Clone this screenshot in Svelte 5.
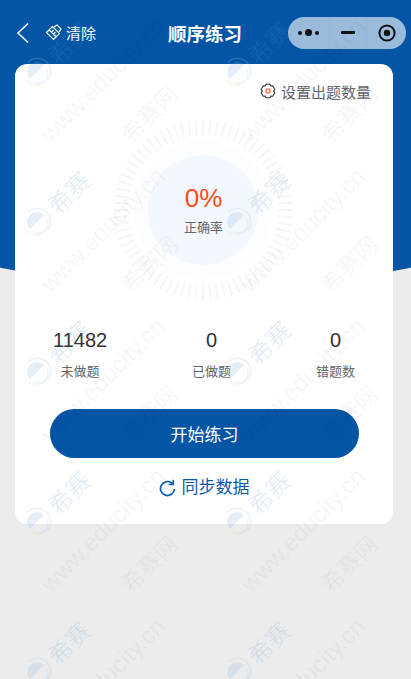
<script>
  const ticks = Array.from({ length: 76 }, (_, i) => (i * 360) / 76);
  const tiles = Array.from({ length: 15 }, (_, i) => i);
  const stats = [
    { value: 11482, label: "未做题" },
    { value: 0, label: "已做题" },
    { value: 0, label: "错题数" },
  ];
</script>

<div class="page">
  <div class="hero"></div>

  <header class="nav">
    <div class="nav-left">
      <svg class="back" width="14" height="22" viewBox="0 0 14 22">
        <path d="M12 1.5 L2 11 L12 20.5" fill="none" stroke="#fff" stroke-width="1.6" />
      </svg>
      <span class="clear">
        <svg width="17" height="17" viewBox="0 0 17 17" fill="none" stroke="#fff" stroke-width="1.2">
          <path d="M1.5 8.5 L7.5 2.5 L14.5 9.5 L8.5 15.5 Z" />
          <path d="M4 6 L11.5 13 M6 8.5 L8.5 6 M8 10.5 L10.5 8" />
          <path d="M9 3 L12 1 L16 5 L14 8" />
        </svg>
        清除
      </span>
    </div>
    <h1>顺序练习</h1>
    <div class="capsule">
      <span class="cap-cell">
        <i class="dot small"></i><i class="dot"></i><i class="dot small"></i>
      </span>
      <span class="cap-cell line"><i class="dash"></i></span>
      <span class="cap-cell">
        <svg width="26" height="26" viewBox="0 0 26 26">
          <circle cx="13" cy="13" r="7.6" fill="none" stroke="#111" stroke-width="2" />
          <circle cx="13" cy="13" r="3.2" fill="#111" />
        </svg>
      </span>
    </div>
  </header>

  <main class="card">
    <div class="setting">
      <svg width="16" height="16" viewBox="0 0 16 16">
        <path
          d="M6 1.2 H10 L10.8 3 L12.8 2.8 L14.8 6.2 L13.6 8 L14.8 9.8 L12.8 13.2 L10.8 13 L10 14.8 H6 L5.2 13 L3.2 13.2 L1.2 9.8 L2.4 8 L1.2 6.2 L3.2 2.8 L5.2 3 Z"
          fill="none"
          stroke="#333"
          stroke-width="1.1"
          stroke-linejoin="round"
        />
        <circle cx="8" cy="8" r="2.1" fill="none" stroke="#fa6a4a" stroke-width="1.3" />
      </svg>
      设置出题数量
    </div>

    <div class="gauge">
      <svg class="ring" width="182" height="182" viewBox="0 0 182 182">
        {#each ticks as deg}
          <line x1="91" y1="1" x2="91" y2="16" stroke="#f6f6f6" stroke-width="2" transform="rotate({deg} 91 91)" />
        {/each}
        <circle cx="91" cy="91" r="69" fill="#fcfdff" />
        <circle cx="91" cy="91" r="55" fill="#f3f8fe" />
      </svg>
      <div class="rate">
        <span class="percent">0%</span>
        <span class="rate-label">正确率</span>
      </div>
    </div>

    <div class="stats">
      {#each stats as s}
        <div class="stat">
          <span class="num">{s.value}</span>
          <span class="lbl">{s.label}</span>
        </div>
      {/each}
    </div>

    <button class="start">开始练习</button>

    <div class="sync">
      <svg width="17" height="18" viewBox="0 0 17 18" fill="none" stroke="#0a5aa8" stroke-width="1.7">
        <path d="M13.5 4.6 A7 7 0 1 0 15.5 10" />
        <path d="M14.2 0.8 V5.4 H9.6" stroke-width="1.5" />
      </svg>
      同步数据
    </div>
  </main>

  <div class="marks">
    {#each tiles as t}
      <div class="tile">
        <svg class="logo" width="40" height="40" viewBox="0 0 40 40" fill="none">
          <path d="M7.5 25 A13.5 13.5 0 0 0 24 33" stroke="#efecb8" stroke-width="1" opacity="0.5" />
          <path d="M11 10 A13.5 13.5 0 0 1 31 28" stroke="#a9c9e4" stroke-width="1.4" opacity="0.25" />
          <path d="M13 27 A9.5 9.5 0 0 1 27 13 Z" fill="#8db8dd" opacity="0.22" />
          <path d="M16 30 A10 10 0 0 0 30 17" stroke="#8db8dd" stroke-width="2" opacity="0.16" />
        </svg>
        <span class="mk blue">希赛</span>
        <span class="mk url">www.educity.cn</span>
        <span class="mk gray">希赛网</span>
      </div>
    {/each}
  </div>
</div>

<style>
  :global(body) {
    margin: 0;
    background: #ececec;
  }

  .page {
    position: relative;
    width: 411px;
    height: 679px;
    overflow: hidden;
    background: #ececec;
    font-family: "Liberation Sans", "Noto Sans CJK SC", sans-serif;
  }

  .hero {
    position: absolute;
    inset: 0 0 auto 0;
    height: 288px;
    background: #0455a6;
    clip-path: circle(1045px at 50% -757px);
  }

  .nav {
    position: relative;
    height: 64px;
    display: grid;
    grid-template-columns: 1fr auto 1fr;
    align-items: center;
    padding: 1px 5px 0 16px;
    box-sizing: border-box;
    color: #fff;
  }

  .nav-left {
    display: flex;
    align-items: center;
    gap: 15px;
  }

  .clear {
    display: flex;
    align-items: center;
    gap: 4px;
    font-size: 15px;
  }

  h1 {
    margin: 0 12px 0 0;
    font-size: 18.5px;
    font-weight: 700;
  }

  .capsule {
    justify-self: end;
    width: 118px;
    height: 32px;
    border-radius: 16px;
    background: rgba(255, 255, 255, 0.6);
    display: grid;
    grid-template-columns: 41px 38px 39px;
    align-items: center;
  }

  .cap-cell {
    display: flex;
    align-items: center;
    justify-content: center;
    gap: 3px;
    height: 100%;
  }

  .line {
    box-shadow: inset 1px 0 rgba(0, 0, 0, 0.02), inset -1px 0 rgba(0, 0, 0, 0.02);
  }

  .dot {
    width: 7px;
    height: 7px;
    border-radius: 50%;
    background: #111;
  }

  .dot.small {
    width: 4px;
    height: 4px;
  }

  .dash {
    width: 14px;
    height: 3px;
    background: #111;
    border-radius: 1px;
  }

  .card {
    position: relative;
    width: 378px;
    height: 460px;
    margin-left: 15px;
    box-sizing: border-box;
    background: #fff;
    border-radius: 12px;
    display: flex;
    flex-direction: column;
  }

  .setting {
    align-self: flex-end;
    display: flex;
    align-items: center;
    gap: 5px;
    margin: 18px 22px 0 0;
    height: 18px;
    font-size: 15px;
    color: #5f6670;
  }

  .gauge {
    position: relative;
    align-self: center;
    width: 182px;
    height: 182px;
    margin: 19px 0 0 -2px;
  }

  .ring {
    display: block;
  }

  .rate {
    position: absolute;
    inset: 0;
    display: flex;
    flex-direction: column;
    align-items: center;
    justify-content: center;
  }

  .percent {
    font-size: 26px;
    line-height: 30px;
    margin-top: -1px;
    margin-left: 1px;
    color: #fb4d1e;
  }

  .rate-label {
    font-size: 13px;
    line-height: 18px;
    margin-top: 6px;
    margin-left: 1px;
    color: #666;
  }

  .stats {
    display: flex;
    justify-content: space-between;
    padding: 0 38px;
    margin-top: 28px;
  }

  .stat {
    display: flex;
    flex-direction: column;
    align-items: center;
    min-width: 39px;
  }

  .num {
    font-size: 20px;
    line-height: 22px;
    color: #333;
  }

  .lbl {
    font-size: 13px;
    line-height: 18px;
    margin-top: 12px;
    color: #666;
  }

  .start {
    width: 309px;
    height: 49px;
    margin: 28px 0 0 35px;
    border: 0;
    border-radius: 25px;
    background: #0455a6;
    color: #fff;
    font-family: inherit;
    font-size: 17px;
  }

  .sync {
    display: flex;
    align-items: center;
    justify-content: center;
    gap: 6px;
    margin: 19px 0 0 0;
    font-size: 17px;
    line-height: 22px;
    color: #0a5aa8;
  }

  .marks {
    position: absolute;
    inset: 0;
    overflow: hidden;
    pointer-events: none;
    display: grid;
    grid-template-columns: repeat(3, 200px);
    grid-auto-rows: 150px;
  }

  .tile {
    position: relative;
  }

  .logo {
    position: absolute;
    left: 17px;
    top: 52px;
  }

  .mk {
    position: absolute;
    white-space: nowrap;
    transform: translate(-50%, -50%) rotate(-45deg);
  }

  .blue {
    left: 68px;
    top: 42px;
    font-size: 24px;
    color: rgba(90, 150, 205, 0.16);
  }

  .url {
    left: 103px;
    top: 80px;
    font-size: 24px;
    color: rgba(0, 0, 0, 0.05);
  }

  .gray {
    left: 148px;
    top: 113px;
    font-size: 23px;
    color: rgba(0, 0, 0, 0.05);
  }
</style>
